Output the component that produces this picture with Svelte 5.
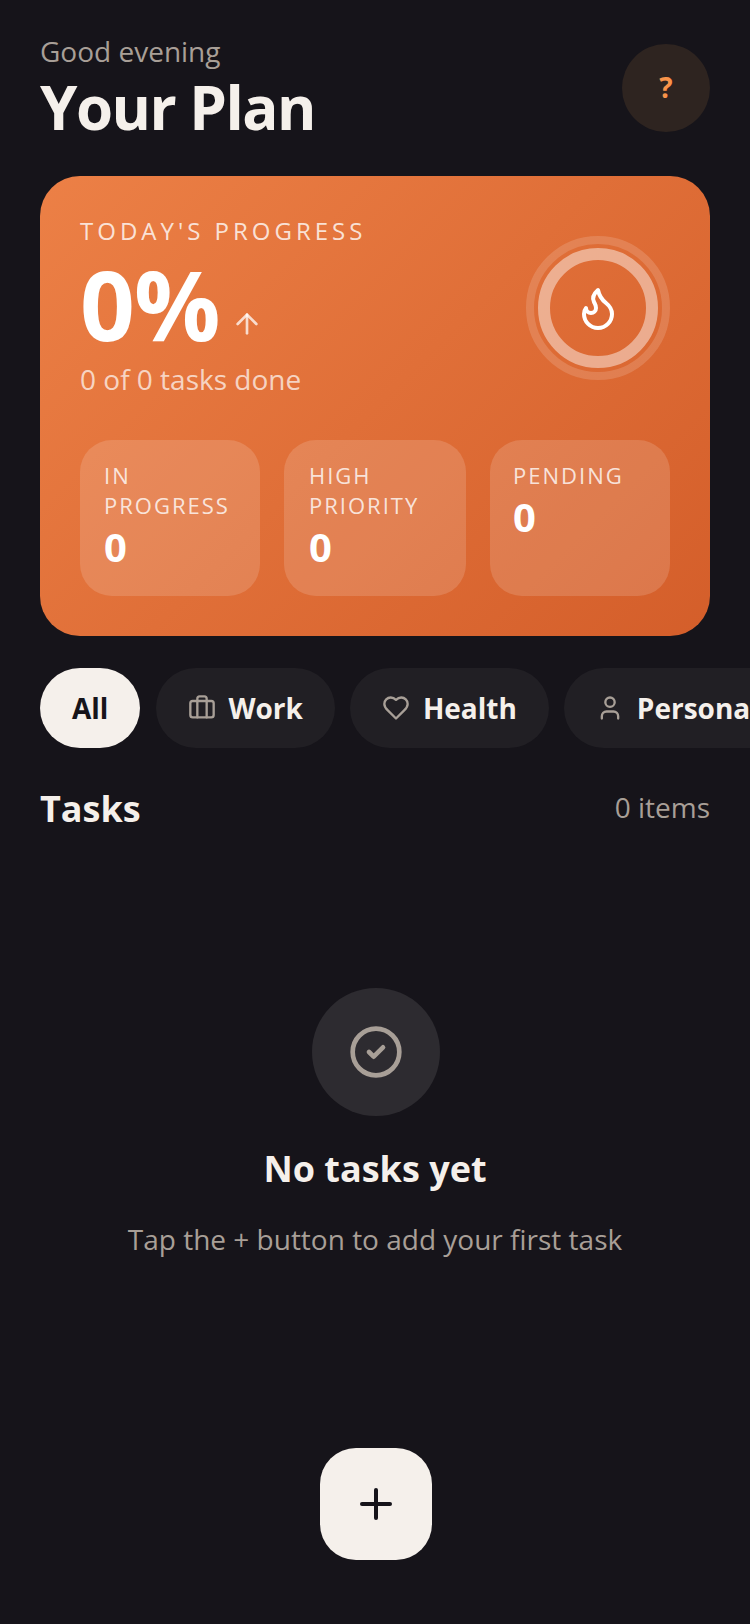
<script lang="ts">
    const stats = [
        { label: "In Progress", value: 0 },
        { label: "High Priority", value: 0 },
        { label: "Pending", value: 0 },
    ];
    const filters = [
        { name: "All", icon: "" },
        { name: "Work", icon: "work" },
        { name: "Health", icon: "health" },
        { name: "Personal", icon: "personal" },
    ];
    let active = $state("All");
</script>

<main class="screen">
    <header class="header">
        <div>
            <div class="greeting">Good evening</div>
            <h1 class="title">Your Plan</h1>
        </div>
        <button class="help">?</button>
    </header>

    <section class="card">
        <div class="card-top">
            <div>
                <div class="eyebrow">TODAY'S PROGRESS</div>
                <div class="percent-row">
                    <span class="percent">0%</span>
                    <svg class="arrow" viewBox="0 0 24 24" fill="none" stroke="currentColor" stroke-width="2" stroke-linecap="round" stroke-linejoin="round">
                        <path d="m5 12 7-7 7 7" />
                        <path d="M12 19V5" />
                    </svg>
                </div>
                <div class="done">0 of 0 tasks done</div>
            </div>
            <div class="ring-outer">
                <div class="ring-inner">
                    <svg class="flame" viewBox="0 0 24 24" fill="none" stroke="currentColor" stroke-width="2" stroke-linecap="round" stroke-linejoin="round">
                        <path d="M8.500 14.500A2.500 2.500 0 0 0 11 12c0-1.380-.5-2-1-3-1.072-2.143-.224-4.054 2-6 .5 2.500 2 4.900 4 6.500 2 1.600 3 3.500 3 5.500a7 7 0 1 1-14 0c0-1.153.433-2.294 1-3a2.500 2.500 0 0 0 2.500 2.500z" />
                    </svg>
                </div>
            </div>
        </div>
        <div class="stats">
            {#each stats as stat (stat.label)}
                <div class="stat">
                    <div class="stat-label">{stat.label}</div>
                    <div class="stat-value">{stat.value}</div>
                </div>
            {/each}
        </div>
    </section>

    <nav class="filters">
        {#each filters as filter (filter.name)}
            <button class="pill" class:active={active === filter.name} onclick={() => (active = filter.name)}>
                {#if filter.icon === "work"}
                    <svg class="pill-icon" viewBox="0 0 24 24" fill="none" stroke="currentColor" stroke-width="2" stroke-linecap="round" stroke-linejoin="round">
                        <path d="M16 20V4a2 2 0 0 0-2-2h-4a2 2 0 0 0-2 2v16" />
                        <rect x="2" y="6" width="20" height="14" rx="2" />
                    </svg>
                {:else if filter.icon === "health"}
                    <svg class="pill-icon" viewBox="0 0 24 24" fill="none" stroke="currentColor" stroke-width="2" stroke-linecap="round" stroke-linejoin="round">
                        <path d="M19 14c1.490-1.460 3-3.210 3-5.500A5.500 5.500 0 0 0 16.500 3c-1.760 0-3 .5-4.500 2-1.500-1.500-2.740-2-4.500-2A5.500 5.500 0 0 0 2 8.500c0 2.300 1.500 4.050 3 5.500l7 7Z" />
                    </svg>
                {:else if filter.icon === "personal"}
                    <svg class="pill-icon" viewBox="0 0 24 24" fill="none" stroke="currentColor" stroke-width="2" stroke-linecap="round" stroke-linejoin="round">
                        <path d="M19 21v-2a4 4 0 0 0-4-4H9a4 4 0 0 0-4 4v2" />
                        <circle cx="12" cy="7" r="4" />
                    </svg>
                {/if}
                {filter.name}
            </button>
        {/each}
    </nav>

    <div class="section-head">
        <h2 class="section-title">Tasks</h2>
        <span class="count">0 items</span>
    </div>

    <div class="empty">
        <div class="empty-icon">
            <svg viewBox="0 0 24 24" fill="none" stroke="currentColor" stroke-width="2" stroke-linecap="round" stroke-linejoin="round">
                <circle cx="12" cy="12" r="10" />
                <path d="m9 12 2 2 4-4" />
            </svg>
        </div>
        <div class="empty-title">No tasks yet</div>
        <div class="empty-text">Tap the + button to add your first task</div>
    </div>

    <button class="fab" aria-label="Add task">
        <svg viewBox="0 0 24 24" fill="none" stroke="currentColor" stroke-width="2" stroke-linecap="round" stroke-linejoin="round">
            <path d="M5 12h14" />
            <path d="M12 5v14" />
        </svg>
    </button>
</main>

<style>
    :global(body) {
        background: #16141a;
    }

    .screen {
        position: relative;
        width: 750px;
        height: 1624px;
        overflow: hidden;
        box-sizing: border-box;
        padding: 32px 40px 0;
        background: #16141a;
        color: #f5f0eb;
        font-family: "Open Sans", sans-serif;
    }

    button {
        font-family: inherit;
        border: none;
    }

    .header {
        display: flex;
        justify-content: space-between;
        align-items: center;
    }

    .greeting {
        font-size: 28px;
        line-height: 38px;
        color: #a89f97;
    }

    .title {
        margin: 0;
        font-size: 60px;
        line-height: 74px;
        font-weight: 700;
        letter-spacing: -1.5px;
    }

    .help {
        width: 88px;
        height: 88px;
        border-radius: 50%;
        background: #2e2420;
        color: #f8934a;
        font-size: 28px;
        line-height: 36px;
        font-weight: 700;
        padding: 0 0 2px;
    }

    .card {
        margin-top: 32px;
        height: 460px;
        box-sizing: border-box;
        padding: 38px 40px 40px;
        border-radius: 40px;
        background: linear-gradient(135deg, #ec8046, #d45e2a);
        color: #fff;
    }

    .card-top {
        display: flex;
        justify-content: space-between;
        align-items: center;
    }

    .eyebrow {
        font-size: 24px;
        line-height: 34px;
        letter-spacing: 4px;
        color: rgba(255, 255, 255, 0.8);
    }

    .percent-row {
        display: flex;
        align-items: flex-end;
        gap: 12px;
        height: 100px;
    }

    .percent {
        font-size: 96px;
        line-height: 100px;
        margin-bottom: -6px;
        font-weight: 700;
        letter-spacing: -1px;
    }

    .arrow {
        width: 32px;
        height: 32px;
        margin-bottom: 8px;
        color: rgba(255, 255, 255, 0.75);
    }

    .done {
        margin-top: 11px;
        font-size: 28px;
        line-height: 40px;
        color: rgba(255, 255, 255, 0.7);
    }

    .ring-outer {
        width: 144px;
        height: 144px;
        margin-top: 3px;
        box-sizing: border-box;
        border-radius: 50%;
        border: 8px solid rgba(255, 255, 255, 0.15);
        padding: 4px;
    }

    .ring-inner {
        width: 100%;
        height: 100%;
        box-sizing: border-box;
        border-radius: 50%;
        border: 12px solid rgba(255, 255, 255, 0.45);
        display: flex;
        align-items: center;
        justify-content: center;
    }

    .flame {
        width: 48px;
        height: 48px;
        color: #fff;
    }

    .stats {
        display: grid;
        grid-template-columns: 1fr 182px 1fr;
        gap: 24px;
        margin-top: 41px;
    }

    .stat {
        height: 156px;
        box-sizing: border-box;
        padding: 20px 24px;
        border-radius: 32px;
        background: rgba(255, 255, 255, 0.15);
    }

    .stat:nth-child(2) {
        padding-left: 25px;
    }

    .stat:nth-child(3) {
        padding-left: 23px;
    }

    .stat-label {
        font-size: 22px;
        line-height: 30px;
        letter-spacing: 2px;
        text-transform: uppercase;
        color: rgba(255, 255, 255, 0.8);
    }

    .stat-value {
        margin-top: 3px;
        font-size: 40px;
        line-height: 48px;
        font-weight: 700;
    }

    .filters {
        display: flex;
        gap: 15.600px;
        margin-top: 32px;
        width: 900px;
    }

    .pill {
        display: flex;
        align-items: center;
        gap: 12.400px;
        height: 80px;
        padding: 0 32px;
        border-radius: 40px;
        background: #211f24;
        color: #f5f0eb;
        font-size: 28px;
        font-weight: 700;
        white-space: nowrap;
    }

    .pill.active {
        background: #f5f0eb;
        color: #16141a;
    }

    .pill-icon {
        width: 28px;
        height: 28px;
        color: #a89f97;
    }

    .section-head {
        display: flex;
        justify-content: space-between;
        align-items: center;
        margin-top: 36px;
    }

    .section-title {
        margin: 0;
        font-size: 36px;
        line-height: 50px;
        font-weight: 700;
    }

    .count {
        font-size: 28px;
        line-height: 46px;
        margin-bottom: 4px;
        color: #a89f97;
    }

    .empty {
        display: flex;
        flex-direction: column;
        align-items: center;
        margin-top: 154px;
    }

    .empty-icon {
        width: 128px;
        height: 128px;
        margin-left: 2px;
        border-radius: 50%;
        background: #2d2b30;
        color: #a89f97;
        display: flex;
        align-items: center;
        justify-content: center;
    }

    .empty-icon svg {
        width: 56px;
        height: 56px;
    }

    .empty-title {
        margin-top: 28px;
        font-size: 36px;
        line-height: 50px;
        font-weight: 700;
    }

    .empty-text {
        margin-top: 24px;
        font-size: 28px;
        line-height: 42px;
        color: #a89f97;
    }

    .fab {
        position: absolute;
        left: 320px;
        top: 1448px;
        width: 112px;
        height: 112px;
        border-radius: 36px;
        background: #f5f0eb;
        color: #16141a;
        padding: 0;
        display: flex;
        align-items: center;
        justify-content: center;
    }

    .fab svg {
        width: 48px;
        height: 48px;
    }
</style>
